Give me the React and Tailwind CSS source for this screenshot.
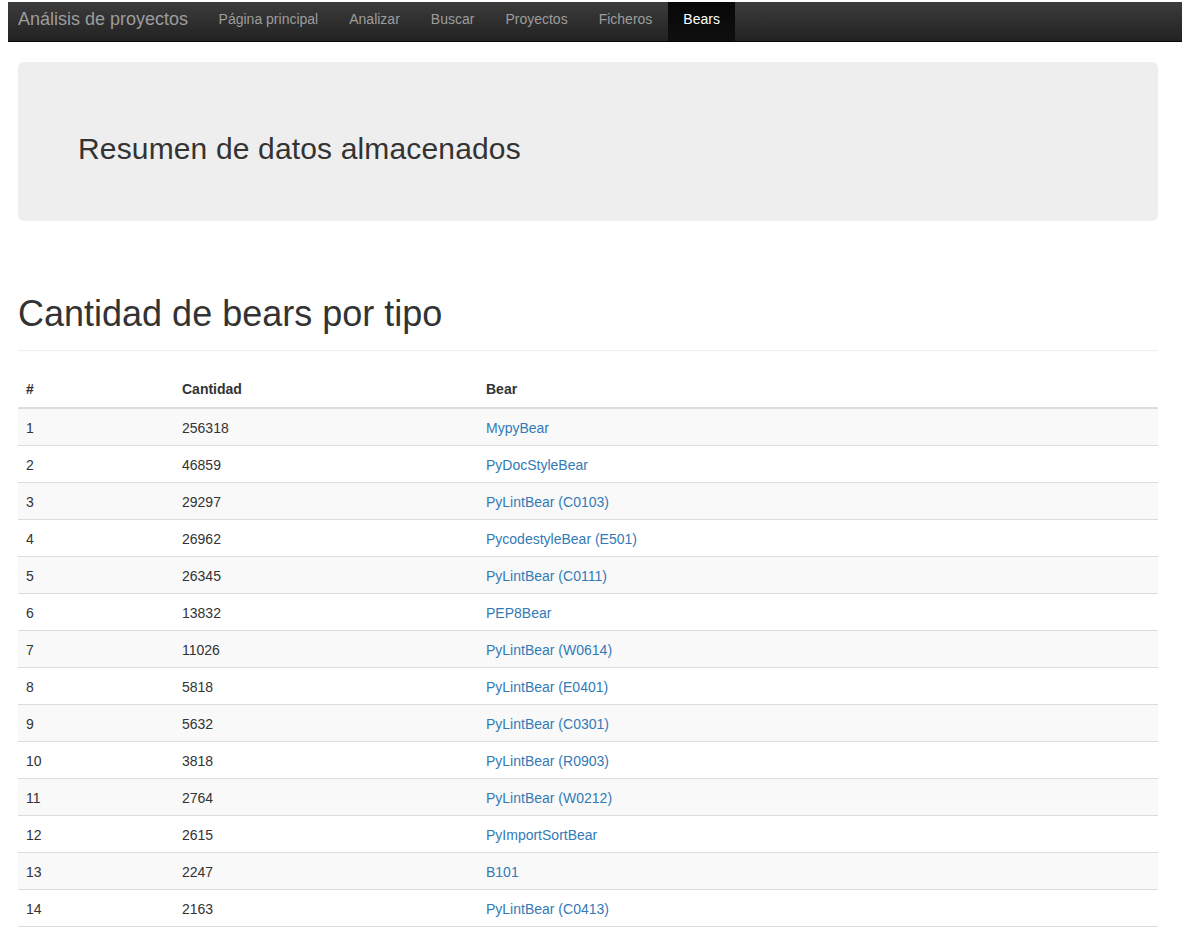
import React from 'react';

const navLinks = ['Página principal', 'Analizar', 'Buscar', 'Proyectos', 'Ficheros', 'Bears'];

const rows = [
  [1, 256318, 'MypyBear'],
  [2, 46859, 'PyDocStyleBear'],
  [3, 29297, 'PyLintBear (C0103)'],
  [4, 26962, 'PycodestyleBear (E501)'],
  [5, 26345, 'PyLintBear (C0111)'],
  [6, 13832, 'PEP8Bear'],
  [7, 11026, 'PyLintBear (W0614)'],
  [8, 5818, 'PyLintBear (E0401)'],
  [9, 5632, 'PyLintBear (C0301)'],
  [10, 3818, 'PyLintBear (R0903)'],
  [11, 2764, 'PyLintBear (W0212)'],
  [12, 2615, 'PyImportSortBear'],
  [13, 2247, 'B101'],
  [14, 2163, 'PyLintBear (C0413)'],
];

export default function App() {
  return (
    <div className="min-h-screen bg-white pt-[2px] text-[14px] text-[#333] font-['Liberation_Sans',Arial,sans-serif]">
      {/* Navbar */}
      <nav className="ml-[8px] flex h-[40px] items-stretch border-b border-[#080808] bg-gradient-to-b from-[#3c3c3c] to-[#222]">
        <a className="flex items-center pb-[4px] pl-[10px] pr-[15px] text-[18px] text-[#9d9d9d]" href="#">
          Análisis de proyectos
        </a>
        {navLinks.map((l) => (
          <a
            key={l}
            href="#"
            className={
              l === 'Bears'
                ? 'flex items-center bg-gradient-to-b from-[#080808] to-[#0f0f0f] px-[15.5px] pb-[4px] text-white'
                : 'flex items-center px-[15.5px] pb-[4px] text-[#9d9d9d]'
            }
          >
            {l}
          </a>
        ))}
      </nav>

      <div className="mx-[18px] w-[1140px]">
        {/* Jumbotron */}
        <div className="mt-[20px] rounded-[6px] bg-[#eee] px-[60px] py-[48px]">
          <h2 className="mt-[22px] mb-[8px] text-[30px] leading-[33px] tracking-[0.15px]">Resumen de datos almacenados</h2>
        </div>

        {/* Page header */}
        <div className="mt-[73px] border-b border-[#eee] pb-[16px]">
          <h1 className="text-[36px] leading-[40px]">Cantidad de bears por tipo</h1>
        </div>

        {/* Table */}
        <table className="mt-[20px] w-full border-collapse text-left">
          <thead>
            <tr className="border-b-2 border-[#ddd]">
              <th className="w-[156px] p-[8px] leading-[20px] font-bold">#</th>
              <th className="w-[304px] p-[8px] leading-[20px] font-bold">Cantidad</th>
              <th className="p-[8px] leading-[20px] font-bold">Bear</th>
            </tr>
          </thead>
          <tbody>
            {rows.map(([n, c, b]) => (
              <tr key={n} className={n % 2 === 1 ? 'border-b border-[#ddd] bg-[#f9f9f9]' : 'border-b border-[#ddd]'}>
                <td className="px-[8px] pt-[9px] pb-[7px] leading-[20px]">{n}</td>
                <td className="px-[8px] pt-[9px] pb-[7px] leading-[20px]">{c}</td>
                <td className="px-[8px] pt-[9px] pb-[7px] leading-[20px]">
                  <a href="#" className="text-[#337ab7]">{b}</a>
                </td>
              </tr>
            ))}
          </tbody>
        </table>
      </div>
    </div>
  );
}
